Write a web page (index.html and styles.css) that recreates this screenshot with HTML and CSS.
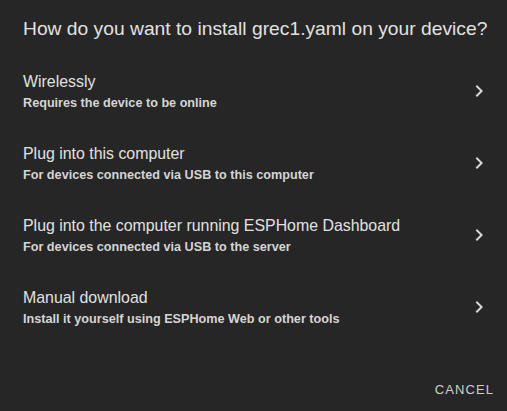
FILE: index.html
```html
<!DOCTYPE html>
<html>
<head>
<meta charset="utf-8">
<link rel="stylesheet" href="styles.css">
</head>
<body>
<div class="dialog">
  <h2 class="title">How do you want to install grec1.yaml on your device?</h2>
  <ul class="list">
    <li class="item">
      <div class="text">
        <span class="primary">Wirelessly</span>
        <span class="secondary">Requires the device to be online</span>
      </div>
      <svg class="chev" viewBox="0 0 24 24" width="24" height="24"><path d="M10 6L8.59 7.41 13.17 12l-4.58 4.59L10 18l6-6z"/></svg>
    </li>
    <li class="item">
      <div class="text">
        <span class="primary">Plug into this computer</span>
        <span class="secondary">For devices connected via USB to this computer</span>
      </div>
      <svg class="chev" viewBox="0 0 24 24" width="24" height="24"><path d="M10 6L8.59 7.41 13.17 12l-4.58 4.59L10 18l6-6z"/></svg>
    </li>
    <li class="item">
      <div class="text">
        <span class="primary">Plug into the computer running ESPHome Dashboard</span>
        <span class="secondary">For devices connected via USB to the server</span>
      </div>
      <svg class="chev" viewBox="0 0 24 24" width="24" height="24"><path d="M10 6L8.59 7.41 13.17 12l-4.58 4.59L10 18l6-6z"/></svg>
    </li>
    <li class="item">
      <div class="text">
        <span class="primary">Manual download</span>
        <span class="secondary">Install it yourself using ESPHome Web or other tools</span>
      </div>
      <svg class="chev" viewBox="0 0 24 24" width="24" height="24"><path d="M10 6L8.59 7.41 13.17 12l-4.58 4.59L10 18l6-6z"/></svg>
    </li>
  </ul>
  <div class="actions">
    <button class="cancel">CANCEL</button>
  </div>
</div>
</body>
</html>
```
FILE: styles.css
```css
html, body {
  margin: 0;
  padding: 0;
  background: #262626;
  height: 100%;
}
.dialog {
  font-family: "Liberation Sans", Arial, sans-serif;
  color: #e1e1e1;
  display: flex;
  flex-direction: column;
  width: 507px;
  height: 411px;
  box-sizing: border-box;
}
.title {
  margin: 0;
  font-size: 19.25px;
  font-weight: normal;
  line-height: 22px;
  padding: 18px 0 0 23px;
  height: 55px;
  box-sizing: border-box;
  color: #e1e1e1;
}
.list {
  list-style: none;
  margin: 0;
  padding: 0;
}
.item {
  height: 72px;
  display: flex;
  align-items: center;
  justify-content: space-between;
  padding: 0 16px 0 23px;
}
.text {
  display: flex;
  flex-direction: column;
  padding-top: 2px;
}
.primary {
  font-size: 15.9px;
  line-height: 20px;
  color: #e1e1e1;
}
.secondary {
  font-size: 12.65px;
  font-weight: bold;
  line-height: 18px;
  margin-top: 2px;
  color: #d4d4d4;
}
.chev {
  fill: #d8d8d8;
}
.actions {
  display: flex;
  justify-content: flex-end;
  padding: 28px 0 0 0;
}
.cancel {
  background: none;
  border: none;
  font-family: "Liberation Sans", Arial, sans-serif;
  font-size: 13px;
  letter-spacing: 1.1px;
  color: #cfcfcf;
  height: 36px;
  padding: 0 13px 0 8px;
}
```
